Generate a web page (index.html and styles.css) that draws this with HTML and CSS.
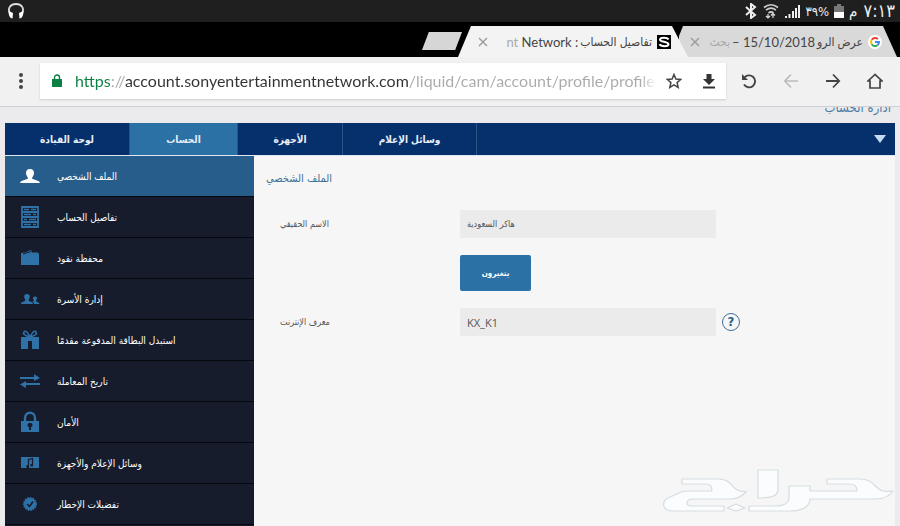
FILE: index.html
```html
<!DOCTYPE html>
<html lang="ar">
<head>
<meta charset="utf-8">
<meta name="viewport" content="width=device-width, initial-scale=1">
<title>تفاصيل الحساب</title>
<link rel="stylesheet" href="styles.css">
</head>
<body>
<div class="status">
  <svg class="headset" width="18" height="16" viewBox="0 0 18 16"><path d="M3.500 11C-.5 5 4 1 9 1s9.500 4 5.500 10" fill="none" stroke="#ddd" stroke-width="1.800"/><path d="M1.500 8l4.500 2-.5 5.500c-2.500 0-4-3-4-7.500zM16.500 8L12 10l.5 5.500c2.500 0 4-3 4-7.500z" fill="#fff"/></svg>
  <svg width="12" height="16" viewBox="0 0 12 16"><path d="M1 4l9 8-4 3V1l4 3-9 8" fill="none" stroke="#eee" stroke-width="2"/></svg>
  <svg width="18" height="16" viewBox="0 0 18 16"><g fill="none" stroke="#ccc" stroke-width="1.700"><path d="M2 4.500q7-5.500 14 0M4 7.200q5-4 10 0M6.500 10q2.500-2 5 0"/></g><path d="M6 11v4M4 13l2 2 2-2M11 15v-4M9 12.500l2-2 2 2" fill="none" stroke="#ddd" stroke-width="1.200"/></svg>
  <svg width="15" height="16" viewBox="0 0 15 16"><path d="M0 13h2v2H0zM3.500 11h2v4h-2zM7 8h2v7H7zM10 5h2v10h-2zM13 2h2v13h-2z" fill="#eee"/></svg>
  <span class="percent" dir="ltr">٣٩%</span>
  <svg width="10" height="16" viewBox="0 0 10 16"><path d="M3 1h4v2h3v6H0V3h3z" fill="#777"/><path d="M0 9h10v6H0z" fill="#fff"/></svg>
  <span class="clock"><span class="period">م</span><time>٧:١٣</time></span>
</div>

<div class="tabs">
  <button class="new-tab" aria-label="علامة تبويب جديدة"></button>
  <div class="tab tab-active">
    <button class="close" aria-label="إغلاق"><svg width="10" height="10" viewBox="0 0 10 10"><path d="M1 1l8 8M9 1L1 9"/></svg></button>
    <span class="tab-title"><span><span class="fade">nt</span> Network :</span><bdi class="tab-ar">تفاصيل الحساب</bdi></span>
    <svg width="14" height="14" viewBox="0 0 14 14"><path d="M0 0h14v14H0z"/><path d="M11.500 4.500C10 2 3 2 3 4.700c0 2.300 8.500 1.800 8.500 4.500 0 2.600-7.500 2.600-9 0" fill="none" stroke="#fff" stroke-width="2"/></svg>
  </div>
  <div class="tab tab-back">
    <button class="close" aria-label="إغلاق"><svg width="10" height="10" viewBox="0 0 10 10"><path d="M1 1l8 8M9 1L1 9"/></svg></button>
    <span class="tab-title"><bdi class="tab-ar fade">بحث</bdi><span>– 15/10/2018</span><bdi class="tab-ar">عرض الرو</bdi></span>
    <svg width="14" height="14" viewBox="0 0 14 14"><circle cx="7" cy="7" r="7" fill="#fff"/><g fill="none" stroke-width="2"><path d="M3.700 4.800a4 4 0 0 1 6.200-.7" stroke="#ea4335"/><path d="M3.700 9.200a4 4 0 0 1 0-4.400" stroke="#fbbc05"/><path d="M9.500 10.200a4 4 0 0 1-5.800-1" stroke="#34a853"/><path d="M7 7h4a4 4 0 0 1-1.500 3.200" stroke="#4285f4"/></g></svg>
  </div>
</div>

<header class="toolbar">
  <button class="tool menu" aria-label="القائمة"><svg width="6" height="18" viewBox="0 0 6 18"><g fill="#444"><circle cx="3" cy="3" r="2"/><circle cx="3" cy="9" r="2"/><circle cx="3" cy="15" r="2"/></g></svg></button>
  <div class="address">
    <svg width="10" height="13" viewBox="0 0 10 13"><path d="M0 5h10v8H0z" fill="#0b8043"/><path d="M2.500 5V3.500a2.500 2.500 0 0 1 5 0V5" fill="none" stroke="#0b8043" stroke-width="1.400"/></svg>
    <input class="url" type="text" aria-label="العنوان" dir="ltr" value="https://account.sonyentertainmentnetwork.com/liquid/cam/account/profile/profile">
    <button class="tool star" aria-label="إشارة مرجعية"><svg width="16" height="16" viewBox="0 0 16 16"><path d="M8 1.500l1.900 4.500 4.900.4-3.700 3.200 1.100 4.800L8 11.900l-4.200 2.500 1.100-4.800L1.200 6.400l4.900-.4z" fill="none" stroke="#444" stroke-width="1.500"/></svg></button>
    <button class="tool" aria-label="تنزيل"><svg width="14" height="16" viewBox="0 0 14 16"><path d="M4.500 1h5v5H13l-6 6-6-6h3.500zM1 13.500h12V15.500H1z" fill="#333"/></svg></button>
  </div>
  <div class="actions">
    <button class="tool" aria-label="إعادة تحميل"><svg width="16" height="16" viewBox="0 0 16 16"><path d="M3 5.200A6 6 0 1 1 3 11.500" fill="none" stroke="#444" stroke-width="1.900"/><path d="M1 1v6h6z" fill="#444"/></svg></button>
    <button class="tool" aria-label="رجوع"><svg width="16" height="16" viewBox="0 0 16 16"><path d="M15 8H2M8 1.500L1.800 8 8 14.500" fill="none" stroke="#bbb" stroke-width="1.700"/></svg></button>
    <button class="tool" aria-label="تقدم"><svg width="16" height="16" viewBox="0 0 16 16"><path d="M1 8h13M8 1.500L14.200 8 8 14.500" fill="none" stroke="#444" stroke-width="1.800"/></svg></button>
    <button class="tool" aria-label="الصفحة الرئيسية"><svg width="16" height="16" viewBox="0 0 16 16"><path d="M8 1.500L1 8h2v7h10V8h2z" fill="none" stroke="#444" stroke-width="1.700"/></svg></button>
  </div>
</header>

<div class="page">
  <div class="crumb"><span dir="rtl">ادارة الحساب</span></div>
  <nav class="topnav">
    <a href="#">لوحة القيادة</a>
    <a href="#" class="current">الحساب</a>
    <a href="#">الأجهزة</a>
    <a href="#">وسائل الإعلام</a>
    <button class="more" aria-label="المزيد"><svg width="12" height="8" viewBox="0 0 12 8"><path d="M0 0h12L6 8z" fill="#c5dcf0"/></svg></button>
  </nav>
  <div class="columns">
    <nav class="side">
      <a href="#" class="current"><svg width="20" height="20" viewBox="0 0 20 20"><path d="M10 3c3 0 4 2 4 4s-1 3-2 5c0 2 7 1.500 8 5H0c1-3.500 8-3 8-5-1-2-2-3-2-5s1-4 4-4z"/></svg><span>الملف الشخصي</span></a>
      <a href="#"><svg width="20" height="22" viewBox="0 0 20 22"><path d="M2 1h16v20H2zM2 6h16M2 11h16M2 16h16" fill="none" stroke="#2e72a8" stroke-width="1.800"/><path d="M4 3.500h5M11 3.500h5M4 8.500h7M13 8.500h3M4 13.500h3M9 13.500h7M4 18.500h7M13 18.500h3" stroke="#2e72a8" stroke-width="1.500"/></svg><span>تفاصيل الحساب</span></a>
      <a href="#"><svg width="20" height="20" viewBox="0 0 20 20"><path d="M1 5l4-.5L11 2l1 2.500h6l1 2V17H1z"/><path d="M3 6l8-2.500" stroke="#171c2c" stroke-width="1"/></svg><span>محفظة نقود</span></a>
      <a href="#"><svg width="20" height="20" viewBox="0 0 20 20"><path d="M7 5c4 0 3 4 1.500 6 0 2 4.500 1 4.500 4H1c0-3 4.500-2 4.500-4C4 9 3 5 7 5zM15 7.500c3 0 2 3 1 4 0 2 3 1 3.500 3.500H14c0-2-1.500-2-1.500-3 1 0 1.500 0 1.500-.5-1-1-2-4 1-4z"/></svg><span>إدارة الأسرة</span></a>
      <a href="#"><svg width="20" height="20" viewBox="0 0 20 20"><path d="M1 7h7.500v4H1zM11.500 7H19v4h-7.500zM1 11h7v8H1zM12 11h7v8h-7zM8 7h4v4H8z"/><path d="M10 7Q2 5 4 2t6 5q4-8 6-5t-6 5" fill="none" stroke="#2e72a8" stroke-width="1.600"/></svg><span>استبدل البطاقة المدفوعة مقدمًا</span></a>
      <a href="#"><svg width="20" height="20" viewBox="0 0 20 20"><path d="M0 6h14V3l6 4-6 3V8H0zM20 12H6v-2l-6 3.500L6 17v-3h14z"/></svg><span>تاريخ المعاملة</span></a>
      <a href="#"><svg width="20" height="22" viewBox="0 0 20 22"><path d="M1 10h18v11H1z"/><path d="M5 10V7c0-7 10-7 10 0v3" fill="none" stroke="#2e72a8" stroke-width="2.400"/><path d="M10 12a2 2 0 0 1 1 4v3H9v-3a2 2 0 0 1 1-4z" fill="#171c2c"/></svg><span>الأمان</span></a>
      <a href="#"><svg width="20" height="20" viewBox="0 0 20 20"><path d="M1 4h18v11H1z"/><path d="M8.500 13V6.500l4-1V12" fill="none" stroke="#171c2c" stroke-width="1.200"/><path d="M6.500 12h2.500v3H6.500zM10.500 11h2.500v2.500h-2.500z" fill="#171c2c"/></svg><span>وسائل الإعلام والأجهزة</span></a>
      <a href="#"><svg width="20" height="20" viewBox="0 0 20 20"><circle cx="10" cy="10" r="6"/><circle cx="10" cy="10" r="6" fill="none" stroke="#2e72a8" stroke-width="2" stroke-dasharray="1.500 1"/><path d="M7 10l2.500 2.500L13 7.500" fill="none" stroke="#171c2c" stroke-width="1.600"/></svg><span>تفضيلات الإخطار</span></a>
    </nav>
    <main class="content">
      <h1>الملف الشخصي</h1>
      <form class="profile">
        <label for="name">الاسم الحقيقي</label>
        <input id="name" type="text" value="هاكر السعودية" readonly>
        <button class="edit" type="button">يتغيرون</button>
        <label for="online">معرف الإنترنت</label>
        <input id="online" class="latin" type="text" value="KX_K1" readonly>
        <button class="help" type="button" aria-label="مساعدة">?</button>
      </form>
      <svg class="watermark" width="232" height="46" viewBox="0 0 232 46"><g fill="#fafcfd" stroke="#d5dde1" stroke-width="1.200" stroke-linejoin="round"><path d="M19 10h36c14 0 13 10 22 12 4 1 8 0 6 1-5 5-9 7-15 7H30c-7 0-8 7-2 7h33v5H10C-2 42-1 32 5 29l13-6c4-1 5-1 8-1h23c0-5-1-7-8-7H19z"/><path d="M95 1h20v19c0 7-6 9-20 9z"/><path d="M64 39l9-4 9 4-9 3z"/><path d="M86 37h26c9 0 14-2 14-9V17h21v5h47c0-5-2-7-9-7h-21v-5h33c14 0 15 10 23 12 3 1 8 0 10 0-4 6-9 8-18 8h-65c0 8-9 12-19 12H86z"/></g></svg>
    </main>
  </div>
</div>
</body>
</html>
```
FILE: styles.css
```css
* { box-sizing: border-box; }
body {
  margin: 0;
  min-height: 100vh;
  display: flex;
  flex-direction: column;
  background: #ebebed;
  font-family: "DejaVu Sans Condensed", "DejaVu Sans", sans-serif;
  font-size: 10px;
  overflow: hidden;
}
button { border: 0; padding: 0; background: none; font: inherit; }
a { text-decoration: none; }
svg { display: block; flex: none; }

.status {
  display: flex;
  align-items: center;
  gap: 5px;
  height: 22px;
  padding: 0 5px 0 7px;
  background: #1f1f1f;
  color: #eee;
}
.headset { margin-right: auto; }
.percent { font-size: 13px; }
.clock { display: flex; align-items: center; gap: 6px; font-size: 18px; line-height: 22px; }
.period { font-size: 15px; }

.tabs {
  display: flex;
  justify-content: flex-end;
  height: 35px;
  padding: 4px 3px 0 0;
  background: #000;
}
.new-tab {
  width: 40px;
  height: 18px;
  margin: 6px -4px 0 0;
  background: #d6d6d6;
  clip-path: polygon(17% 0, 100% 0, 83% 100%, 0 100%);
}
.tab {
  display: flex;
  align-items: center;
  gap: 5px;
  height: 31px;
  font-family: Lato, "DejaVu Sans Condensed", "DejaVu Sans", sans-serif;
  font-size: 13px;
  color: #444;
}
.tab-active {
  z-index: 1;
  width: 230px;
  padding: 0 17px 0 20px;
  background: #f3f3f3;
  clip-path: polygon(13px 0, 214px 0, 100% 100%, 0 100%);
}
.tab-back {
  width: 218px;
  margin-left: -9px;
  padding: 0 15px 0 11px;
  background: #d9d9d9;
  clip-path: polygon(4px 0, 204px 0, 100% 100%, 0 100%, 0 10px);
}
.tab-title { flex: 1; display: flex; justify-content: flex-end; gap: 2px; align-items: center; white-space: nowrap; }
.tab-ar { font-size: 12px; }
.fade { color: #aaa; }
.close svg { fill: none; stroke: #999; stroke-width: 1.3; }

.toolbar {
  display: flex;
  align-items: center;
  height: 50px;
  padding: 0 17px 2px 18px;
  background: #f1f1f1;
  border-bottom: 1px solid #d0d0d0;
}
.menu { margin-right: 16px; }
.address {
  flex: 1;
  display: flex;
  align-items: center;
  height: 36px;
  padding: 0 10px 0 12px;
  background: #fff;
  box-shadow: 0 1px 2px #ccc;
}
.url {
  flex: 1;
  min-width: 0;
  height: 30px;
  margin: 0 9px 0 13px;
  padding: 0;
  border: 0;
  font-family: Lato, sans-serif;
  font-size: 16px;
  color: transparent;
  background: linear-gradient(to right, #0b8043 36px, #aaa 36px 50px, #333 50px 334px, #aaa 334px 565px, #fff 100%);
  background-clip: text;
}
.star { margin-right: 20px; }
.actions { display: flex; gap: 26px; margin-left: 15px; }

.page { flex: 1; display: flex; flex-direction: column; padding: 0 5px; }
.crumb {
  height: 16px;
  padding-right: 4px;
  overflow: hidden;
  text-align: right;
  font-size: 13px;
  line-height: 2px;
  color: #4f7ea6;
}
.topnav {
  display: grid;
  grid-template-columns: 125px 108px 105px 134px 1fr;
  height: 33px;
  background: #06306c;
  border-bottom: 1px solid #dfe8f2;
  font-weight: bold;
}
.topnav a {
  display: flex;
  align-items: center;
  justify-content: center;
  color: #e6eef8;
  border-right: 1px solid #2d5489;
}
.topnav .current { background: #2c71a6; }
.more { justify-self: end; margin-right: 9px; }
.columns { flex: 1; display: grid; grid-template-columns: 249px 1fr; }
.side { display: grid; grid-auto-rows: 41px; background: #171c2c; font-size: 10px; }
.side a {
  display: flex;
  align-items: center;
  gap: 17px;
  padding-left: 15px;
  color: #fff;
  border-bottom: 1px solid #06080f;
}
.side svg { fill: #2e72a8; }
.side .current { background: #265d8b; }
.side .current svg { fill: #fff; }

.content {
  display: flex;
  flex-direction: column;
  padding: 15px 0 11px 12px;
  background: #f6f6f6;
}
h1 { margin: 0; font-size: 11px; line-height: 15px; font-weight: normal; color: #3f7095; }
.profile {
  display: grid;
  grid-template-columns: 174px 256px 18px;
  column-gap: 6px;
  row-gap: 17px;
  align-items: center;
  justify-content: start;
  padding: 24px 0 0 14px;
  color: #555;
}
.profile label { grid-column: 1; font-size: 9px; }
.profile input {
  width: 100%;
  height: 28px;
  padding: 0 7px;
  border: 0;
  background: #ebebeb;
  color: #555;
  font-family: inherit;
  font-size: 9px;
}
.profile .latin { font-family: "Open Sans", sans-serif; font-size: 11px; }
.edit {
  grid-column: 2;
  width: 71px;
  height: 36px;
  border-radius: 2px;
  background: #2c71a6;
  color: #fff;
  font-size: 8px;
  font-weight: bold;
}
.help {
  width: 18px;
  height: 18px;
  border: 1px solid #3a6f98;
  border-radius: 50%;
  color: #235f8d;
  font-size: 13px;
  font-weight: bold;
  line-height: 14px;
}
.watermark { margin: auto 0 0 auto; }
```
